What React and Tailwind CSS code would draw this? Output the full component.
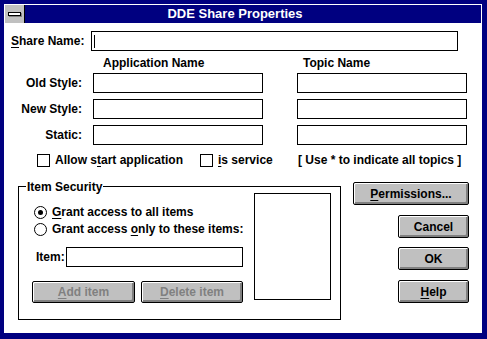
import React from 'react';

// Win 3.1 style push button
const Button = ({ children, className = '', disabled = false }) => (
    <button
        className={
            'flex items-center justify-center whitespace-nowrap rounded-[2px] border border-black bg-[#c0c0c0] shadow-[inset_1px_1px_0_#fff,inset_-2px_-2px_0_#808080] ' +
            (disabled ? 'text-[#808080] ' : 'text-black ') +
            className
        }
    >
        {children}
    </button>
);

const Ul = ({ children }) => <span className="underline underline-offset-[2px] decoration-1">{children}</span>;

const TextBox = ({ className = '', children }) => (
    <div className={'h-[20px] border border-black bg-white shrink-0 ' + className}>{children}</div>
);

const Checkbox = () => <div className="w-[13px] h-[13px] border border-black bg-white shrink-0" />;

const Radio = ({ checked }) => (
    <div className="w-[13px] h-[13px] rounded-full border border-black bg-white flex items-center justify-center shrink-0">
        {checked && <div className="w-[5px] h-[5px] rounded-full bg-black" />}
    </div>
);

const FieldRow = ({ label, className = '' }) => (
    <div className={'flex items-center ' + className}>
        <span className="w-[77px] text-right">{label}</span>
        <TextBox className="ml-[11px] w-[170px]" />
        <TextBox className="ml-[34px] w-[170px]" />
    </div>
);

export default function App() {
    return (
        <div className="w-[487px] h-[339px] bg-[#000080] pl-[4px] pt-[4px] pr-[5px] pb-[6px] font-['Liberation_Sans',Arial,sans-serif] text-[12px] font-bold leading-[16px] text-black whitespace-nowrap">
            <div className="h-full bg-white p-[1px] flex flex-col">
                {/* title bar */}
                <div className="h-[18px] bg-[#000080] flex items-stretch shrink-0">
                    <div className="w-[20px] bg-[#c0c0c0] border-r border-black flex items-center justify-center">
                        <div className="w-[13px] h-[4px] border border-black bg-white shadow-[1px_1px_0_#808080]" />
                    </div>
                    <div className="flex-1 flex items-center justify-center pr-[36px] text-white text-[13px]">DDE Share Properties</div>
                </div>

                {/* share name */}
                <div className="flex items-center mt-[8px]">
                    <span className="w-[86px] pl-[6px]"><Ul>S</Ul>hare Name:</span>
                    <TextBox className="w-[367px] flex items-center pl-[2px]">
                        <div className="w-[1px] h-[13px] bg-black" />
                    </TextBox>
                </div>

                <div className="flex mt-[4px] h-[16px]">
                    <span className="ml-[98px] w-[200px]">Application Name</span>
                    <span>Topic Name</span>
                </div>

                <FieldRow label="Old Style:" className="mt-[2px]" />
                <FieldRow label="New Style:" className="mt-[6px]" />
                <FieldRow label="Static:" className="mt-[6px]" />

                {/* options */}
                <div className="flex items-center h-[16px] mt-[7px]">
                    <div className="ml-[32px] w-[163px] flex items-center">
                        <Checkbox />
                        <span className="ml-[5px]">Allow s<Ul>t</Ul>art application</span>
                    </div>
                    <div className="w-[98px] flex items-center">
                        <Checkbox />
                        <span className="ml-[5px]"><Ul>i</Ul>s service</span>
                    </div>
                    <span>[ Use * to indicate all topics ]</span>
                </div>

                {/* item security + buttons */}
                <div className="flex items-start mt-[14px]">
                    <div className="relative ml-[13px] mt-[4px] w-[323px] h-[134px] border border-black flex">
                        <span className="absolute left-[7px] top-[-8px] bg-white px-[1px]">Item Security</span>
                        <div className="w-[235px] flex flex-col">
                            <div className="flex items-center h-[16px] mt-[17px] pl-[15px]">
                                <Radio checked />
                                <span className="ml-[5px]"><Ul>G</Ul>rant access to all items</span>
                            </div>
                            <div className="flex items-center h-[16px] mt-[1px] pl-[15px]">
                                <Radio />
                                <span className="ml-[5px]">Grant access <Ul>o</Ul>nly to these items:</span>
                            </div>
                            <div className="flex items-center mt-[10px]">
                                <span className="w-[47px] pl-[17px]">Item:</span>
                                <TextBox className="w-[177px]" />
                            </div>
                            <div className="flex mt-[14px] pl-[13px]">
                                <Button disabled className="w-[103px] h-[22px]"><Ul>A</Ul>dd item</Button>
                                <Button disabled className="ml-[6px] w-[102px] h-[22px]"><Ul>D</Ul>elete item</Button>
                            </div>
                        </div>
                        <div className="w-[77px] h-[107px] mt-[6px] border border-black bg-white" />
                    </div>

                    <div className="ml-[12px] w-[116px] flex flex-col items-end">
                        <Button className="w-[116px] h-[23px]"><Ul>P</Ul>ermissions...</Button>
                        <Button className="mt-[10px] w-[71px] h-[23px]">Cancel</Button>
                        <Button className="mt-[9px] w-[71px] h-[23px]">OK</Button>
                        <Button className="mt-[10px] w-[71px] h-[23px]"><Ul>H</Ul>elp</Button>
                    </div>
                </div>
            </div>
        </div>
    );
}
